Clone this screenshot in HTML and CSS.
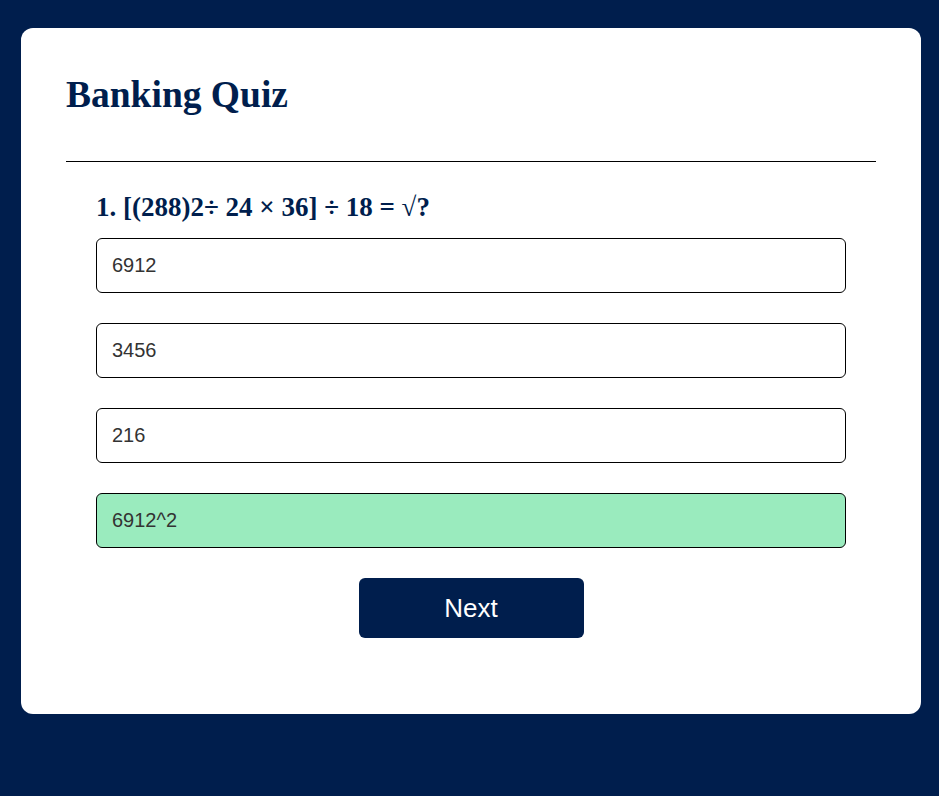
FILE: index.html
```html
<!DOCTYPE html>
<html lang="en">
<head>
<meta charset="utf-8">
<title>Banking Quiz</title>
<link rel="stylesheet" href="styles.css">
</head>
<body>
<div class="card">
  <h1 class="title">Banking Quiz</h1>
  <div class="rule"></div>
  <div class="quiz">
    <h2 class="question">1. [(288)2÷ 24 × 36] ÷ 18 = √?</h2>
    <div class="options">
      <div class="option">6912</div>
      <div class="option">3456</div>
      <div class="option">216</div>
      <div class="option correct">6912^2</div>
    </div>
    <div class="actions">
      <button class="next">Next</button>
    </div>
  </div>
</div>
</body>
</html>
```

FILE: styles.css
```css
html, body {
  margin: 0;
  padding: 0;
}
body {
  background: #001e4d;
  min-height: 796px;
  padding-top: 28px;
  box-sizing: border-box;
  font-family: "Liberation Serif", "Times New Roman", serif;
}
.card {
  width: 900px;
  margin-left: 21px;
  background: #ffffff;
  border-radius: 12px;
  padding: 46px 45px 76px;
  box-sizing: border-box;
}
.title {
  margin: 0;
  font-size: 37.5px;
  font-weight: bold;
  color: #001e4d;
  line-height: 42px;
}
.rule {
  margin-top: 45px;
  border-top: 1px solid #000;
}
.quiz {
  padding: 30px 30px 0;
}
.question {
  margin: 0 0 16px;
  font-size: 27px;
  line-height: 30px;
  font-weight: bold;
  color: #001e4d;
}
.options {
  display: flex;
  flex-direction: column;
  gap: 30px;
}
.option {
  height: 55px;
  box-sizing: border-box;
  border: 1px solid #000;
  border-radius: 6px;
  padding: 0 15px;
  display: flex;
  align-items: center;
  font-family: "Liberation Sans", Arial, sans-serif;
  font-size: 20px;
  color: #333;
  background: #fff;
}
.option.correct {
  background: #9aebbe;
}
.actions {
  display: flex;
  justify-content: center;
  margin-top: 30px;
}
.next {
  width: 225px;
  height: 60px;
  border: none;
  border-radius: 6px;
  background: #001e4d;
  color: #fff;
  font-family: "Liberation Sans", Arial, sans-serif;
  font-size: 26px;
  padding: 0;
}
```
